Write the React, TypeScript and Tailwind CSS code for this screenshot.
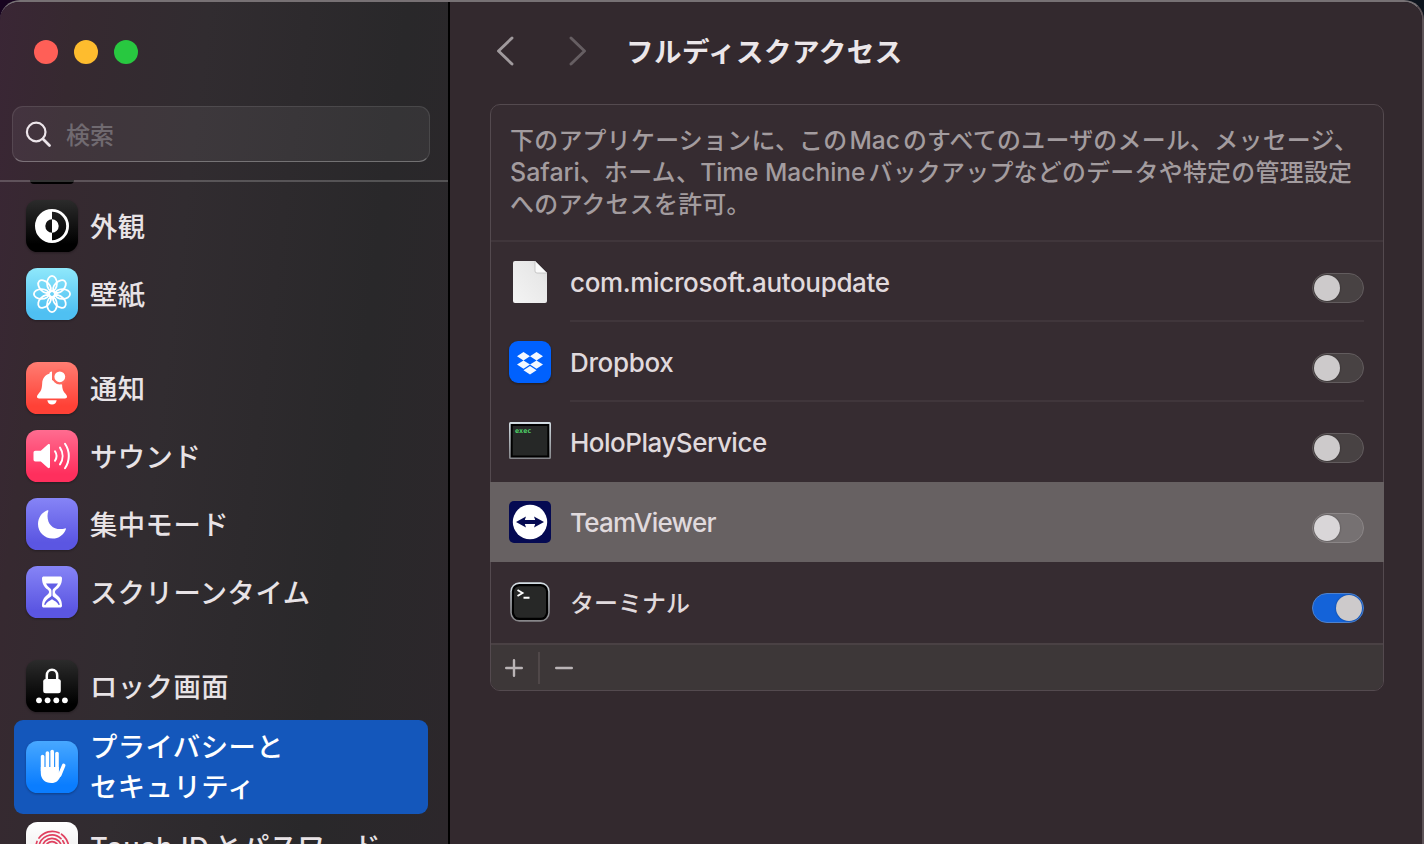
import React from "react";

const FONT = "font-['Inter','Noto_Sans_CJK_JP',sans-serif]";

function Tile({ id, from, to, children }: { id: string; from: string; to: string; children: React.ReactNode }) {
  return (
    <svg viewBox="0 0 52 52" className="size-[52px] shrink-0 drop-shadow-[0_1px_1px_rgba(0,0,0,0.3)]">
      <defs>
        <linearGradient id={id} x1="0" y1="0" x2="0" y2="1">
          <stop offset="0" stopColor={from} />
          <stop offset="0.85" stopColor={to} />
        </linearGradient>
      </defs>
      <rect width="52" height="52" rx="11.5" fill={`url(#${id})`} />
      {children}
    </svg>
  );
}

const AppearanceIcon = () => (
  <Tile id="appearance" from="#2b2b2b" to="#000000">
    <circle cx="26" cy="26" r="15.6" fill="none" stroke="#fff" strokeWidth="2.8" />
    <path d="M26 10v9.3a6.7 6.7 0 0 0 0 13.4V42a16 16 0 0 1 0-32z" fill="#fff" />
    <path d="M26 19.3a6.7 6.7 0 0 1 0 13.4z" fill="#fff" />
  </Tile>
);

const WallpaperIcon = () => (
  <Tile id="wallpaper" from="#8fe8fb" to="#4fc0f2">
    <g fill="none" stroke="#fff" strokeWidth="1.8">
      {[0, 45, 90, 135, 180, 225, 270, 315].map((a) => (
        <ellipse key={a} transform={`rotate(${a} 26 26)`} cx="26" cy="15.500" rx="4.900" ry="7.600" />
      ))}
      <circle cx="26" cy="26" r="2.900" />
    </g>
  </Tile>
);

const BellIcon = () => (
  <Tile id="bell" from="#ff7d72" to="#ff4136">
    <path
      d="M26 9.600c-1.500 0-2.500.9-2.700 2.100-4.300 1.200-6.900 4.800-7.100 9.500-.3 6.200-1.200 7.600-3.500 10.300-1.100 1.300-1.700 2.300-1.700 3.300 0 1 .8 1.600 2 1.600h26c1.200 0 2-.6 2-1.600 0-1-.6-2-1.700-3.300-2.100-2.500-3-4.200-3.200-9.100L26 18z"
      fill="#fff"
    />
    <path d="M21.300 38.200h9.400c-.4 2.700-2.200 4.300-4.700 4.300s-4.300-1.600-4.700-4.300z" fill="#fff" />
    <circle cx="33.800" cy="14.800" r="6.500" fill="#fff" stroke="#ff6a5f" strokeWidth="2.200" />
  </Tile>
);

const SoundIcon = () => (
  <Tile id="sound" from="#ff6c90" to="#ff2f5d">
    <path d="M9.500 20.700h5.300l7-6.200c1-.9 2.200-.5 2.200.9v21.400c0 1.400-1.200 1.800-2.200.9l-7-6.300H9.500c-1.300 0-2-.7-2-2v-6.700c0-1.300.7-2 2-2z" fill="#fff" />
    <g fill="none" stroke="#fff" strokeWidth="2" strokeLinecap="round">
      <path d="M29 21.300a8.500 8.500 0 0 1 0 9.400" />
      <path d="M34 17.600a15 15 0 0 1 0 16.800" />
      <path d="M39 13.800a21.500 21.500 0 0 1 0 24.400" />
    </g>
  </Tile>
);

const MoonIcon = () => (
  <Tile id="moon" from="#8684f6" to="#5b56e2">
    <path
      d="M21.300 12.300c.7-.3 1.300.2 1 .9-.5 1.300-.8 3-.8 4.700 0 8 5.100 13.200 13 13.200 1.500 0 3.200-.3 4.300-.7.800-.3 1.300.3 1 1C37.600 36.800 32.700 40.500 26.700 40.500 18.400 40.500 12 34.300 12 26c0-6.200 3.900-11.600 9.300-13.700z"
      fill="#fff"
    />
  </Tile>
);

const HourglassIcon = () => (
  <Tile id="hourglass" from="#8684f6" to="#5b56e2">
    <path
      d="M18 10.500h16c1.300 0 2 .6 2 1.800 0 6-2.500 9-5.600 11.300-2 1.500-2 3.300 0 4.800C33.500 30.700 36 33.700 36 39.700c0 1.200-.7 1.800-2 1.800H18c-1.300 0-2-.6-2-1.800 0-6 2.500-9 5.600-11.300 2-1.500 2-3.300 0-4.800C18.500 21.300 16 18.300 16 12.300c0-1.200.7-1.800 2-1.800z"
      fill="#fff"
    />
    <path d="M20 17.600h12c-1 2-2.200 3.200-3.800 4.400-1.900 1.400-1.700 2.600-1.700 4v3.500c0 1.800 7 4 7.200 9.500h-1c-1.700-3-4-4-6.700-5.700-2.700 1.700-5 2.700-6.700 5.700h-1c.2-5.500 7.200-7.700 7.200-9.500V26c0-1.400.2-2.600-1.700-4-1.600-1.200-2.800-2.400-3.800-4.400z" fill="#625ee6" />
  </Tile>
);

const LockIcon = () => (
  <Tile id="lock" from="#2b2b2b" to="#000000">
    <path d="M20.800 20v-4.600c0-3.300 2.200-5.700 5.200-5.700s5.200 2.400 5.200 5.700V20" fill="none" stroke="#fff" strokeWidth="2.500" />
    <rect x="17.200" y="19" width="17.600" height="14.200" rx="2.500" fill="#fff" />
    {[13, 21.600, 30.300, 38.900].map((x) => (
      <circle key={x} cx={x} cy="40.300" r="2.900" fill="#fff" />
    ))}
  </Tile>
);

const HandIcon = () => (
  <Tile id="hand" from="#48a8ff" to="#0a7dff">
    <g stroke="#fff" strokeLinecap="round" fill="none" strokeWidth="3.600">
      <path d="M16.600 15.600V30" />
      <path d="M21.400 12V28" />
      <path d="M26.200 10.600V28" />
      <path d="M31 12.600V30" />
      <path d="M37.700 24.400l-4 9.600" />
    </g>
    <path d="M14.800 26h18v5.500l4.700-4-2.700 7C32.900 39.500 30.200 42 25.400 42c-6.500 0-10.600-4-10.600-10z" fill="#fff" />
  </Tile>
);

const TouchIdIcon = () => (
  <Tile id="touchid" from="#ffffff" to="#e9e9e9">
    <g fill="none" stroke="#e0405f" strokeWidth="1.700" strokeLinecap="round">
      <path d="M13 16a16.500 16.500 0 0 1 20-5.200" />
      <path d="M35.500 12.200A16.500 16.500 0 0 1 42.500 27" />
      <path d="M10 26.500a16 16 0 0 1 1-7" />
      <path d="M13 30v-4a13 13 0 0 1 22-9.400" />
      <path d="M36.800 18.800a13 13 0 0 1 2.200 7.200v5" />
      <path d="M16.300 32v-6a9.700 9.700 0 0 1 19.400 0v6" />
      <path d="M19.600 32v-6a6.400 6.400 0 0 1 12.800 0v6" />
      <path d="M22.800 32v-6a3.200 3.200 0 0 1 6.400 0v6" />
    </g>
  </Tile>
);

function NavItem({ icon, label }: { icon: React.ReactNode; label: React.ReactNode }) {
  return (
    <li className="flex h-[68px] shrink-0 items-center gap-[12px] pl-[26px]">
      {icon}
      <span className="pt-[3px] text-[27.3px] leading-[40px] font-medium tracking-[0.5px] whitespace-nowrap text-[#e8e3e6]">{label}</span>
    </li>
  );
}

function Sidebar() {
  return (
    <aside className="flex h-full w-[450px] shrink-0 flex-col overflow-hidden border-r-2 border-black bg-[linear-gradient(97deg,#3a2635_0%,#362930_14%,#312c30_38%,#29282a_74%,#2c272b_100%)]">
      <div className="flex h-[178px] shrink-0 flex-col">
        <div className="flex gap-4 pt-[38px] pl-[34px]">
          <span className="size-6 rounded-full bg-[#ff5f57]" />
          <span className="size-6 rounded-full bg-[#febc2e]" />
          <span className="size-6 rounded-full bg-[#28c840]" />
        </div>
        <div className="mt-[42px] ml-3 flex h-[56px] w-[418px] items-center rounded-[11px] border border-white/10 border-b-white/30 bg-white/[0.06]">
          <svg viewBox="0 0 28 28" className="ml-[12px] size-7" fill="none" stroke="#ece5ea" strokeLinecap="round">
            <circle cx="11.200" cy="12" r="9.300" strokeWidth="2.200" />
            <path d="M18 19l6.500 6.500" strokeWidth="2.800" />
          </svg>
          <span className="ml-[13px] pt-[3px] text-[24px] font-medium text-[#706a70]">検索</span>
        </div>
      </div>
      <div className="relative h-3 shrink-0">
        <div className="ml-[30px] h-1 w-11 rounded-b-[7px] bg-black" />
        <div className="absolute inset-x-0 top-0 h-0.5 bg-white/20" />
      </div>
      <ul className="flex flex-col">
        <NavItem icon={<AppearanceIcon />} label="外観" />
        <NavItem icon={<WallpaperIcon />} label="壁紙" />
        <li className="h-[26px] shrink-0" />
        <NavItem icon={<BellIcon />} label="通知" />
        <NavItem icon={<SoundIcon />} label="サウンド" />
        <NavItem icon={<MoonIcon />} label="集中モード" />
        <NavItem icon={<HourglassIcon />} label="スクリーンタイム" />
        <li className="h-[26px] shrink-0" />
        <NavItem icon={<LockIcon />} label="ロック画面" />
        <li className="mx-[14px] flex h-[94px] w-[414px] shrink-0 items-center gap-[12px] rounded-[9px] bg-[#1457bb] pl-3">
          <HandIcon />
          <span className="pt-[2px] text-[27.3px] leading-[40px] font-medium tracking-[0.5px] text-white">
            プライバシーと
            <br />
            セキュリティ
          </span>
        </li>
        <NavItem
          icon={<TouchIdIcon />}
          label={
            <span className="block pb-[3px]">
              Touch ID<span className="ml-[5px]">と</span>パスワード
            </span>
          }
        />
      </ul>
    </aside>
  );
}

const FileIcon = () => (
  <svg viewBox="0 0 42 42" className="size-[42px]">
    <defs>
      <linearGradient id="paper" x1="0" y1="1" x2="1" y2="0">
        <stop offset="0" stopColor="#f4f4f4" />
        <stop offset="0.700" stopColor="#e8e8e8" />
        <stop offset="1" stopColor="#d6d6d6" />
      </linearGradient>
    </defs>
    <path d="M6 0h20l12 12v28a2 2 0 0 1-2 2H6a2 2 0 0 1-2-2V2a2 2 0 0 1 2-2z" fill="url(#paper)" />
    <path d="M26 0l12 12H28a2 2 0 0 1-2-2z" fill="#fafafa" stroke="#bdbdbd" strokeWidth="0.800" />
  </svg>
);

const DropboxIcon = () => (
  <svg viewBox="0 0 42 42" className="size-[42px] drop-shadow-[0_1px_1px_rgba(0,0,0,0.4)]">
    <rect width="42" height="42" rx="9" fill="#0061fe" />
    <path
      d="M14.500 11l6.500 4.200-6.500 4.200L8 15.200zM27.500 11l6.500 4.200-6.500 4.200-6.500-4.200zM14.500 19.400l6.500 4.200-6.500 4.200L8 23.600zM27.500 19.400l6.500 4.200-6.500 4.200-6.500-4.200zM21 25l6.500 4.200-6.500 4.300-6.500-4.300z"
      fill="#f4f8ff"
    />
  </svg>
);

const ExecIcon = () => (
  <svg viewBox="0 0 42 42" className="size-[42px]">
    <defs>
      <linearGradient id="frame" x1="0" y1="0" x2="0" y2="1">
        <stop offset="0" stopColor="#d3dde4" />
        <stop offset="1" stopColor="#85868a" />
      </linearGradient>
    </defs>
    <rect x="0" y="1" width="42" height="37" rx="1.500" fill="url(#frame)" />
    <rect x="1.700" y="3" width="38.600" height="33.500" fill="#000" />
    <rect x="3.700" y="5" width="34.600" height="29.500" fill="#262827" />
    <text x="6" y="11.500" className="font-['DejaVu_Sans_Mono',monospace] text-[6.8px] font-bold" fill="#4fd268">
      exec
    </text>
  </svg>
);

const TeamViewerIcon = () => (
  <svg viewBox="0 0 42 42" className="size-[42px]">
    <rect width="42" height="42" rx="5" fill="#050a52" />
    <circle cx="21" cy="21" r="17.200" fill="#fff" />
    <path d="M7 21l10-5.500-1.200 3.500h10.400L25 15.500 35 21l-10 5.500 1.200-3.500H15.800l1.200 3.500z" fill="#050a52" />
  </svg>
);

const TerminalIcon = () => (
  <svg viewBox="0 0 42 42" className="size-[42px]">
    <defs>
      <linearGradient id="bezel" x1="0" y1="0" x2="0" y2="1">
        <stop offset="0" stopColor="#d5e0e6" />
        <stop offset="1" stopColor="#858487" />
      </linearGradient>
    </defs>
    <rect x="1.300" y="1.300" width="39.400" height="39.400" rx="9" fill="url(#bezel)" />
    <rect x="2.800" y="2.900" width="36.400" height="36.200" rx="7.500" fill="#000" />
    <rect x="5" y="5.200" width="32" height="31.600" rx="5.500" fill="#272827" />
    <path d="M8.500 9l5 3-5 3M14.500 16.800h6" fill="none" stroke="#fff" strokeWidth="1.900" />
  </svg>
);

function Toggle({ on, lit }: { on?: boolean; lit?: boolean }) {
  const track = on
    ? "justify-end bg-[#1463d9] border-[#4f82cc]"
    : lit
      ? "justify-start bg-[#767172] border-[#8b8687]"
      : "justify-start bg-[#484243] border-[#625c5e]";
  return (
    <span className={`mt-[14px] flex h-[30px] w-[52px] shrink-0 items-center rounded-full border px-px ${track}`}>
      <span className={`size-[26px] rounded-full shadow-[0_0_2px_rgba(0,0,0,0.4)] ${lit ? "bg-[#d9d6d8]" : "bg-[#cdcacb]"}`} />
    </span>
  );
}

type Row = { icon: React.ReactNode; name: string; text: string; line?: boolean; lit?: boolean; on?: boolean };

const LATIN = "pt-[3px] text-[26px] tracking-[-0.35px]";

const rows: Row[] = [
  { icon: <FileIcon />, name: "com.microsoft.autoupdate", text: LATIN, line: true },
  { icon: <DropboxIcon />, name: "Dropbox", text: LATIN, line: true },
  { icon: <ExecIcon />, name: "HoloPlayService", text: "pt-[3px] text-[26px] tracking-[-0.5px]" },
  { icon: <TeamViewerIcon />, name: "TeamViewer", text: "pt-[3px] text-[26px] tracking-[-0.75px]", lit: true },
  { icon: <TerminalIcon />, name: "ターミナル", text: "pt-[5px] text-[24px]", on: true },
];

function AppRow({ row }: { row: Row }) {
  return (
    <li className={`-mx-px flex h-20 shrink-0 pl-[19px] ${row.lit ? "bg-[#676162]" : ""}`}>
      <span className="flex w-[61px] shrink-0 items-center">{row.icon}</span>
      <div className={`mr-5 flex flex-1 items-center justify-between border-b-2 ${row.line ? "border-[#40363b]" : "border-transparent"}`}>
        <span className={`font-medium text-[#e0dadd] ${row.text}`}>{row.name}</span>
        <Toggle on={row.on} lit={row.lit} />
      </div>
    </li>
  );
}

export default function App() {
  return (
    <div className={`h-[844px] w-[1424px] overflow-hidden bg-[linear-gradient(90deg,#180420,#0d141d)] ${FONT}`}>
      <div className="flex h-full w-full overflow-hidden rounded-t-[20px] border-t-2 border-r-2 border-t-[#777174] border-r-[#5d5357]">
        <Sidebar />
        <main className="flex flex-1 flex-col bg-[#33292e]">
          <header className="flex h-[102px] shrink-0 items-center pb-[4px] pl-[46px]">
            <svg viewBox="0 0 18 30" className="h-[30px] w-[18px]" fill="none" stroke="#a09a9d" strokeWidth="2.900" strokeLinecap="round" strokeLinejoin="round">
              <path d="M16 2L2.500 15 16 28" />
            </svg>
            <svg viewBox="0 0 18 30" className="ml-[55px] h-[30px] w-[18px]" fill="none" stroke="#665e62" strokeWidth="2.900" strokeLinecap="round" strokeLinejoin="round">
              <path d="M2 2l13.500 13L2 28" />
            </svg>
            <h1 className="ml-[39px] pt-[1px] text-[27.5px] leading-10 font-bold tracking-[0.5px] text-[#ebe6e9]">フルディスクアクセス</h1>
          </header>
          <section className="ml-10 flex h-[587px] w-[894px] shrink-0 flex-col rounded-[10px] border border-[#544a4f] bg-[#362c31]">
            <p className="h-[137px] shrink-0 border-b-2 border-[#40363b] pt-[20px] pl-[19px] text-[23.9px] leading-8 font-medium tracking-[0.3px] whitespace-nowrap text-[#a39c9f]">
              下のアプリケーションに、この<span className="mr-[3px] ml-[2px] text-[24.500px] leading-none tracking-[0px]">Mac</span>のすべてのユーザのメール、メッセージ、
              <br />
              <span className="text-[25px] leading-none tracking-[0px]">Safari</span>、ホーム、
              <span className="mr-[3px] text-[24.500px] leading-none tracking-[0px]">Time Machine</span>バックアップなどのデータや特定の管理設定
              <br />
              へのアクセスを許可。
            </p>
            <ul className="flex flex-col">
              {rows.map((row) => (
                <AppRow key={row.name} row={row} />
              ))}
            </ul>
            <footer className="mt-px flex flex-1 items-center rounded-b-[9px] border-t-2 border-[#4a4144] bg-[#3d3738]">
              <svg viewBox="0 0 18 18" className="ml-[14px] size-[18px]" stroke="#bab4b6" strokeWidth="2.400" strokeLinecap="round">
                <path d="M1.200 9h15.600M9 1.200v15.600" />
              </svg>
              <span className="ml-[15px] h-8 w-[2px] bg-[#504849]" />
              <svg viewBox="0 0 18 18" className="ml-[15px] size-[18px]" stroke="#bab4b6" strokeWidth="2.400" strokeLinecap="round">
                <path d="M1.200 9h15.600" />
              </svg>
            </footer>
          </section>
        </main>
      </div>
    </div>
  );
}
